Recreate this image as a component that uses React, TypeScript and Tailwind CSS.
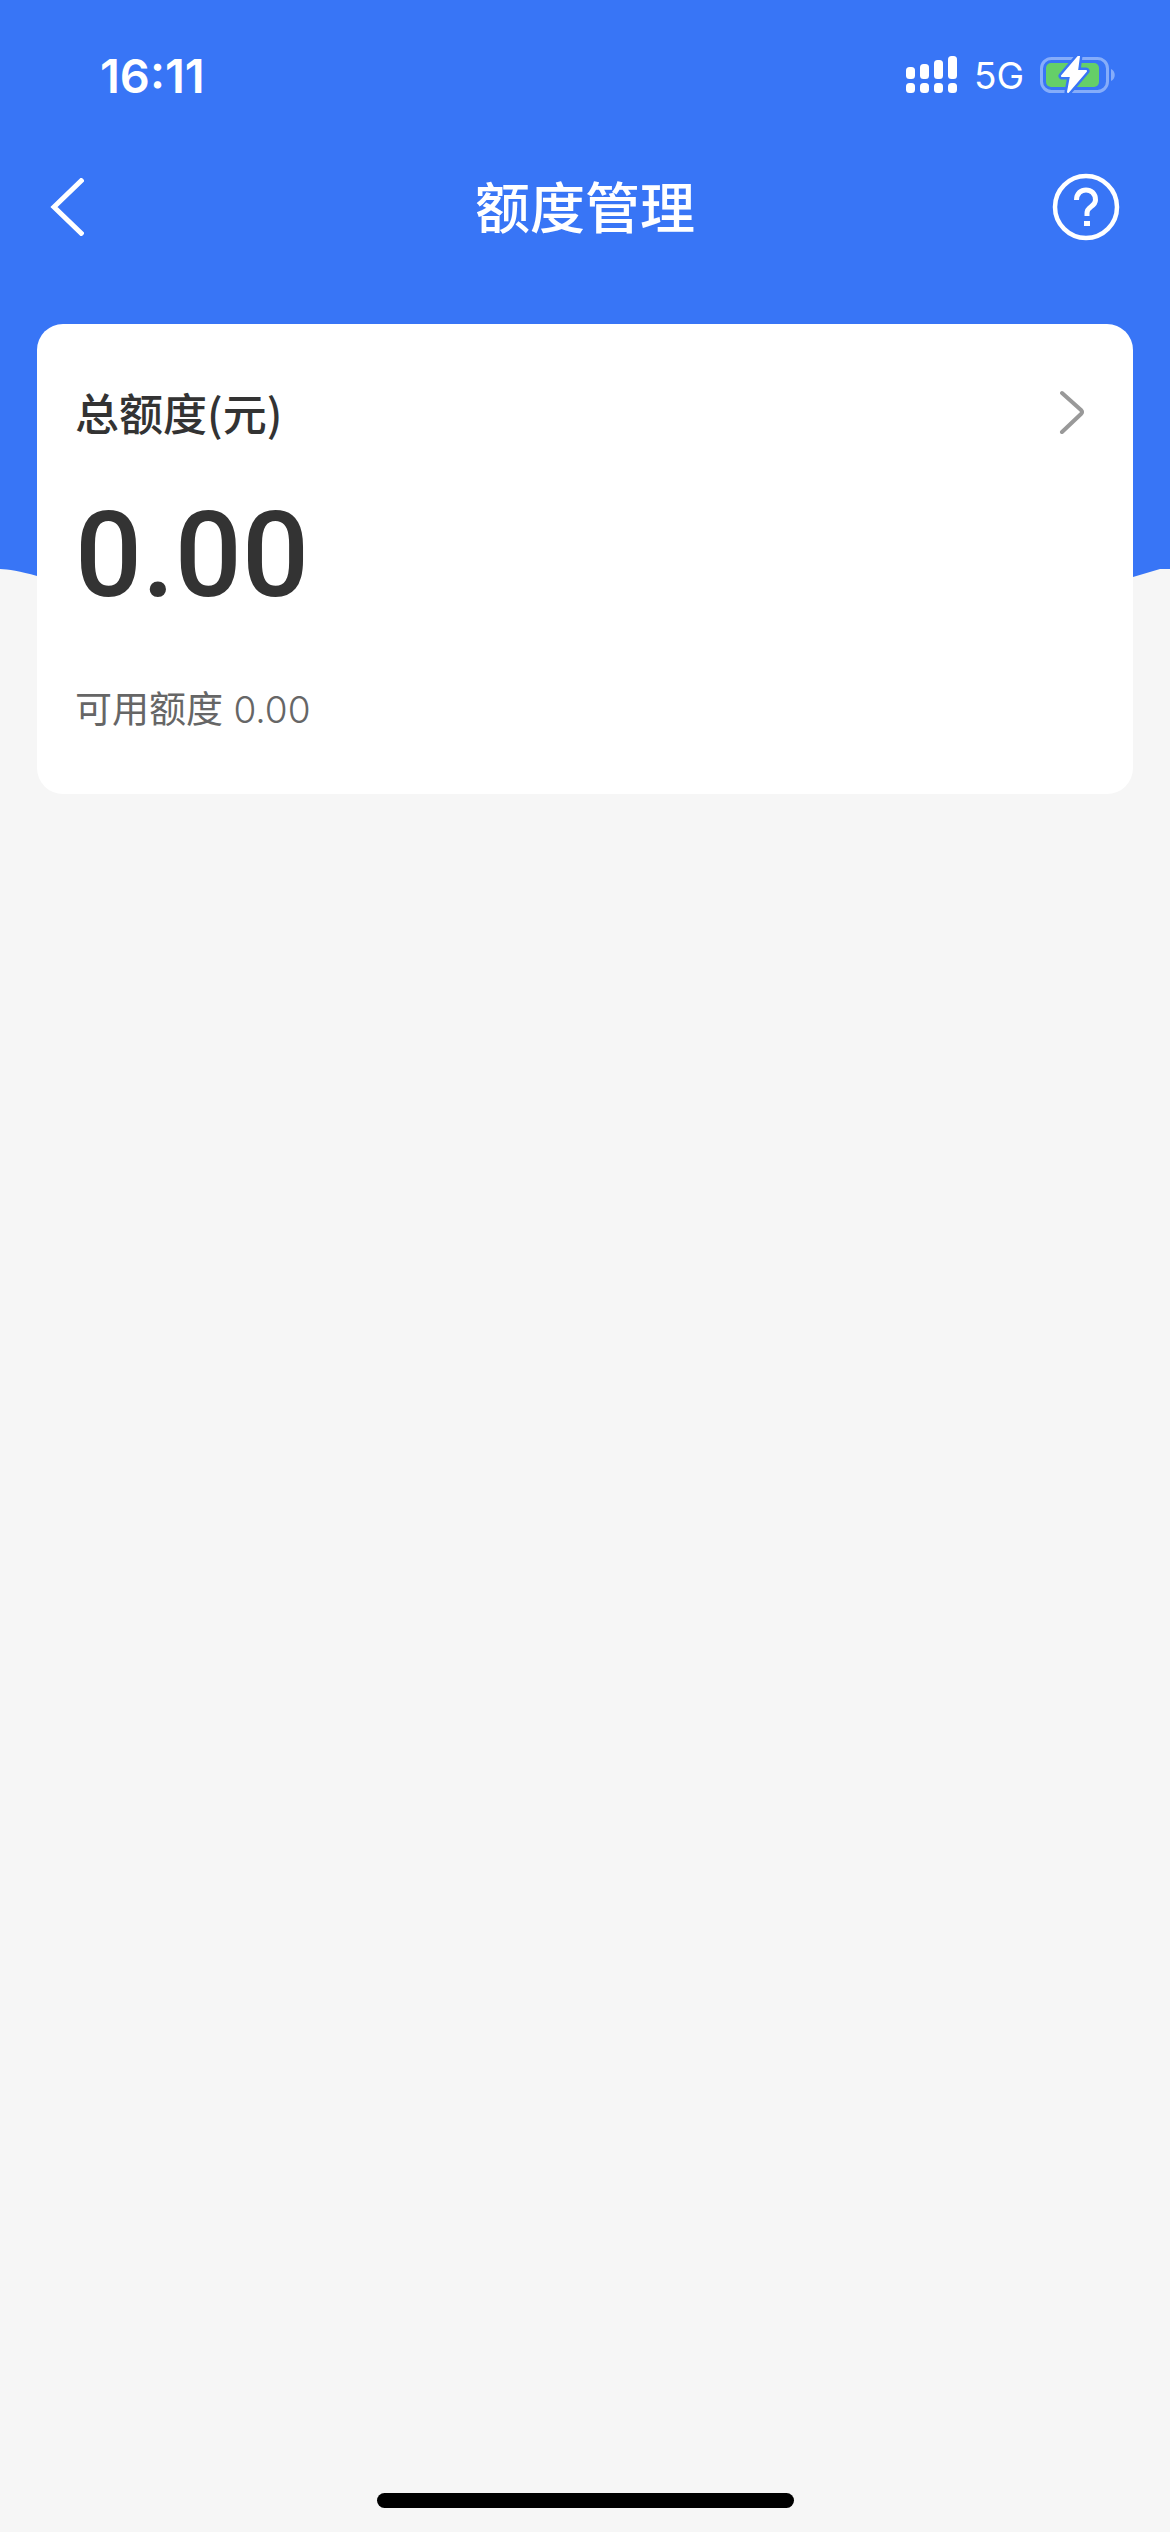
const signalBars = [
  { x: 0, y: 11, height: 12 },
  { x: 14, y: 8, height: 15 },
  { x: 28, y: 4, height: 19 },
  { x: 42, y: 0, height: 23 },
];

function SignalIcon() {
  return (
    <svg width="52" height="38" viewBox="0 0 52 38" fill="#fff" aria-hidden="true">
      {signalBars.map((bar) => (
        <g key={bar.x}>
          <rect x={bar.x} y={bar.y} width="9" height={bar.height} rx="3.5" />
          <rect x={bar.x} y="27" width="9" height="10" rx="3.5" />
        </g>
      ))}
    </svg>
  );
}

function BatteryIcon() {
  const bolt = "M39 0 L22 20 H31 L28 36 L46 15 H37 Z";

  return (
    <svg width="76" height="38" viewBox="0 0 76 38" fill="none" aria-hidden="true">
      <rect x="1.5" y="2.5" width="66" height="33" rx="10" stroke="#86adfa" strokeWidth="3" />
      <path d="M71 13 C76 15 76 23 71 25 Z" fill="#86adfa" />
      <rect x="6" y="7" width="53" height="24" rx="5" fill="#65cf68" />
      <path d={bolt} fill="#3875f6" stroke="#3875f6" strokeWidth="7" strokeLinejoin="round" />
      <path d={bolt} fill="#fff" stroke="#fff" strokeWidth="2" strokeLinejoin="round" />
    </svg>
  );
}

function StatusBar() {
  return (
    <div className="flex h-[150px] items-center justify-between pr-[54px] pl-[100px] font-[Inter,sans-serif] text-white">
      <span className="text-[47px] leading-none font-semibold">16:11</span>
      <div className="flex items-center">
        <SignalIcon />
        <span className="mr-4 ml-4 text-[37px] leading-none">5G</span>
        <BatteryIcon />
      </div>
    </div>
  );
}

function NavBar() {
  return (
    <div className="flex h-[114px] items-center justify-between px-[50px] text-white">
      <button type="button" aria-label="返回" className="w-[68px]">
        <svg width="34" height="58" viewBox="0 0 34 58" fill="none" aria-hidden="true">
          <path d="M33 1 L4 29 L33 57" stroke="#fff" strokeWidth="5" />
        </svg>
      </button>
      <h1 className="pb-1.5 text-[55px] leading-none font-medium">额度管理</h1>
      <button type="button" aria-label="帮助">
        <svg width="68" height="68" viewBox="0 0 68 68" fill="none" stroke="#fff" aria-hidden="true">
          <circle cx="34" cy="34" r="31" strokeWidth="4.5" />
          <path
            d="M24.5 27 C24.5 13.5 43.5 13.5 43.5 27 C43.5 34 35 33 35 40 V43"
            strokeWidth="5"
          />
          <path d="M35 48 V53" strokeWidth="6" />
        </svg>
      </button>
    </div>
  );
}

function QuotaCard() {
  return (
    <section className="mx-[37px] -mt-[276px] rounded-[26px] bg-white px-[38px] pt-[60px] pb-[60px]">
      <div className="flex items-center justify-between">
        <h2 className="text-[44px] leading-[56px] font-medium text-[#333]">总额度(元)</h2>
        <button type="button" aria-label="查看总额度" className="pr-[10px]">
          <svg width="26" height="44" viewBox="0 0 26 44" fill="none" aria-hidden="true">
            <path
              d="M3 3 L22 20 Q24 22 22 24 L3 42"
              stroke="#999"
              strokeWidth="4"
              strokeLinecap="round"
            />
          </svg>
        </button>
      </div>
      <p className="mt-[56px] font-[Roboto,sans-serif] text-[118px] leading-[120px] font-medium text-[#333]">
        0.00
      </p>
      <p className="mt-[70px] font-[Inter,'Noto_Sans_CJK_SC',sans-serif] text-[37px] leading-[48px] font-light text-[#666]">
        <span className="font-normal">可用额度</span> 0.00
      </p>
    </section>
  );
}

export default function App() {
  return (
    <div className="flex min-h-screen flex-col bg-[#f6f6f6] font-['Noto_Sans_CJK_SC',sans-serif]">
      <header className="bg-[#3875f6] pb-[304px]">
        <StatusBar />
        <NavBar />
      </header>
      {/* curved bottom edge of the header */}
      <svg
        className="h-8 w-full shrink-0"
        viewBox="0 0 1170 32"
        preserveAspectRatio="none"
        aria-hidden="true"
      >
        <path d="M0 0 V1 Q12 1 37 8 Q300 32 585 32 Q870 32 1133 9 L1160 1 H1170 V0 Z" fill="#3875f6" />
      </svg>
      <main className="grow">
        <QuotaCard />
      </main>
      <div className="mx-auto mb-6 h-[15px] w-[417px] rounded-full bg-black" />
    </div>
  );
}
